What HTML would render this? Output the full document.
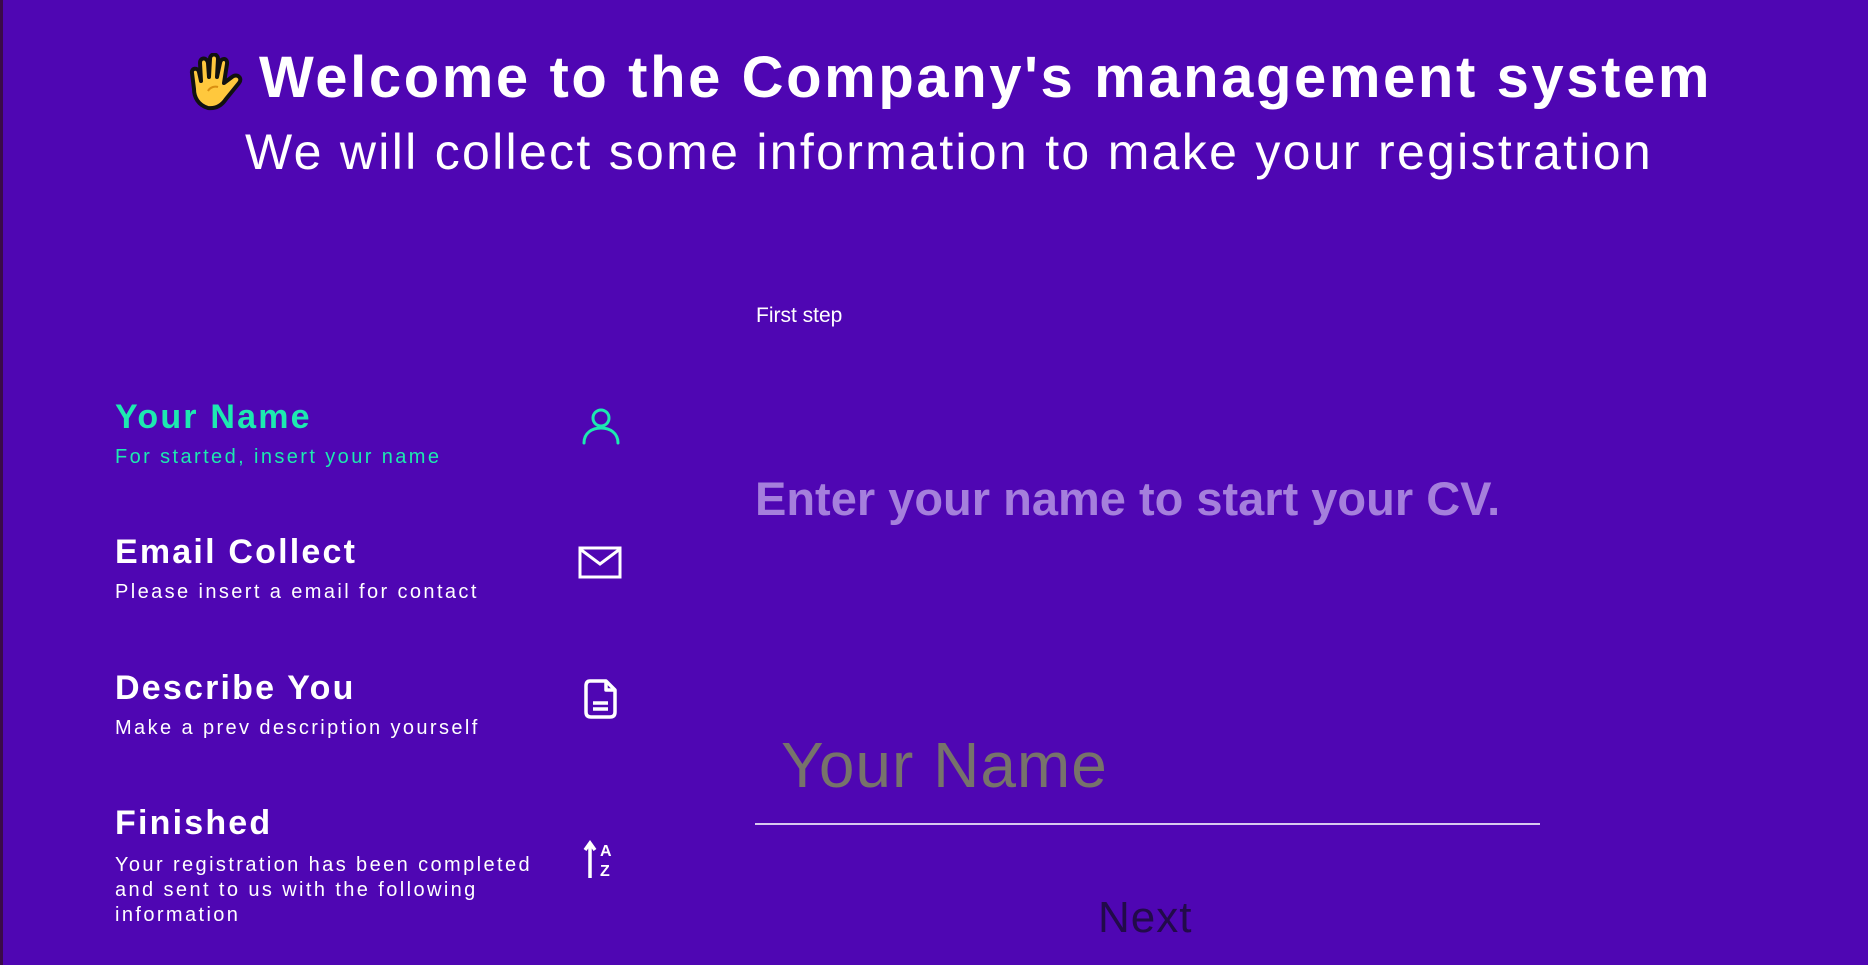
<!DOCTYPE html>
<html><head><meta charset="utf-8"><style>
html,body{margin:0;padding:0}
body{width:1868px;height:965px;background:#4f06b3;position:relative;overflow:hidden;font-family:"Liberation Sans",Arial,sans-serif;color:#fff;border-left:3px solid #3a0a4a;box-sizing:border-box}
.a{position:absolute;white-space:nowrap;line-height:1}
.t{font-weight:bold;font-size:34px;letter-spacing:2.2px}
.s{font-size:20px;letter-spacing:2.4px}
.g{color:#1de9b0}
svg{position:absolute}
</style></head><body>
<svg style="left:185px;top:53px" width="62" height="58" viewBox="0 0 62 58">
<path d="M20 55 C10 52 6 44 6 36 L4 20 C3 15 10 14 11 19 L13 28 L12 10 C12 4 19 4 20 10 L21 24 L22 6 C22 0 30 0 30 6 L29 24 L32 10 C33 4 40 5 39 11 L36 30 L44 24 C49 20 55 25 51 30 L38 46 C34 52 28 56 20 55Z" fill="#ffc83d" stroke="#111" stroke-width="4" stroke-linejoin="round"/>
<path d="M20 38 C22 34 27 33 30 34" fill="none" stroke="#d98e10" stroke-width="2"/>
</svg>
<div class="a" style="left:256px;top:49px;font-size:58px;font-weight:bold;letter-spacing:2.6px">Welcome to the Company's management system</div>
<div class="a" style="left:242px;top:127px;font-size:50px;letter-spacing:2.3px">We will collect some information to make your registration</div>
<div class="a" style="left:753px;top:305px;font-size:21px">First step</div>

<div class="a t g" style="left:112px;top:400px">Your Name</div>
<div class="a s g" style="left:112px;top:447px">For started, insert your name</div>
<div class="a t" style="left:112px;top:535px">Email Collect</div>
<div class="a s" style="left:112px;top:582px">Please insert a email for contact</div>
<div class="a t" style="left:112px;top:671px">Describe You</div>
<div class="a s" style="left:112px;top:718px">Make a prev description yourself</div>
<div class="a t" style="left:112px;top:806px">Finished</div>
<div class="a s" style="left:112px;top:853px;line-height:25px">Your registration has been completed<br>and sent to us with the following<br>information</div>

<svg style="left:578px;top:406px" width="40" height="40" viewBox="0 0 40 40" fill="none" stroke="#1de9b0" stroke-width="3" stroke-linecap="round"><circle cx="20" cy="12" r="8"/><path d="M3 37 C3 27 11 22 20 22 C29 22 37 27 37 37"/></svg>
<svg style="left:575px;top:546px" width="44" height="34" viewBox="0 0 44 34" fill="none" stroke="#fff" stroke-width="3"><rect x="2" y="2" width="40" height="29"/><path d="M2 3 L22 18 L42 3"/></svg>
<svg style="left:580px;top:678px" width="36" height="42" viewBox="0 0 36 42" fill="none" stroke="#fff" stroke-width="3.5" stroke-linejoin="round"><path d="M7 3 H23 L32 12 V34 Q32 39 27 39 H8 Q3 39 3 34 V8 Q3 3 7 3Z"/><path d="M23 3 V12 H32"/><path d="M10 25 H25 M10 31 H25"/></svg>
<svg style="left:580px;top:840px" width="36" height="40" viewBox="0 0 36 40"><path d="M7 38 V4 M2 10 L7 3 L12 10" fill="none" stroke="#fff" stroke-width="3.5"/><text x="17" y="16" font-family="Liberation Sans" font-weight="bold" font-size="16" fill="#fff">A</text><text x="17" y="36" font-family="Liberation Sans" font-weight="bold" font-size="16" fill="#fff">Z</text></svg>

<div class="a" style="left:752px;top:475px;font-size:47px;font-weight:bold;color:#a57fdc">Enter your name to start your CV.</div>
<div class="a" style="left:778px;top:733px;font-size:64px;color:#77736b;letter-spacing:1px">Your Name</div>
<div class="a" style="left:752px;top:823px;width:785px;height:2px;background:#d8c8f0"></div>
<div class="a" style="left:1095px;top:896px;font-size:44px;color:#220b4a;letter-spacing:1px">Next</div>
</body></html>
